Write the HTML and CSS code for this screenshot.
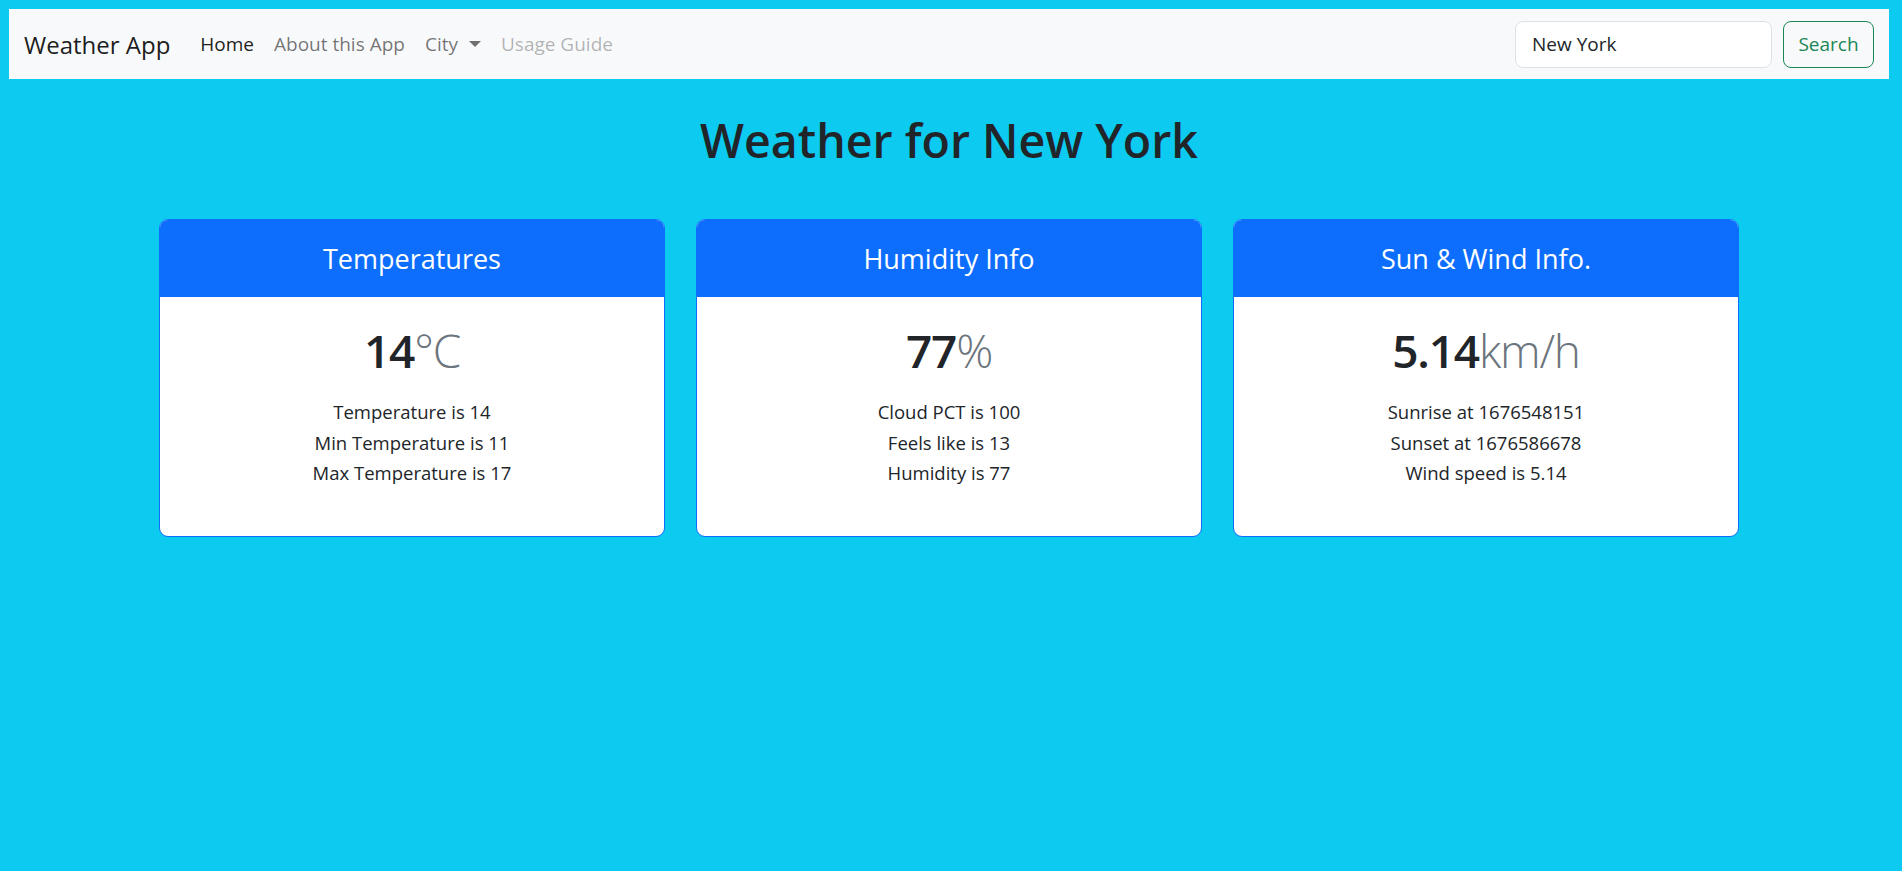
FILE: index.html
```html
<!DOCTYPE html>
<html lang="en">
<head>
<meta charset="utf-8">
<title>Weather App</title>
<link rel="stylesheet" href="styles.css">
</head>
<body>
<nav class="navbar">
  <div class="nav-left">
    <a class="brand" href="#">Weather App</a>
    <ul class="nav-links">
      <li><a class="nav-link active" href="#">Home</a></li>
      <li><a class="nav-link" href="#">About this App</a></li>
      <li><a class="nav-link dropdown" href="#">City<span class="caret"></span></a></li>
      <li><a class="nav-link disabled" href="#">Usage Guide</a></li>
    </ul>
  </div>
  <form class="search">
    <input class="search-input" type="text" value="New York">
    <button class="search-btn" type="button">Search</button>
  </form>
</nav>
<main class="main">
  <h1 class="title">Weather for New York</h1>
  <div class="cards">
    <div class="card">
      <div class="card-header">Temperatures</div>
      <div class="card-body">
        <div class="big"><span class="big-num">14</span><span class="unit">°C</span></div>
        <p class="lines">Temperature is 14<br>Min Temperature is 11<br>Max Temperature is 17</p>
      </div>
    </div>
    <div class="card">
      <div class="card-header">Humidity Info</div>
      <div class="card-body">
        <div class="big"><span class="big-num">77</span><span class="unit">%</span></div>
        <p class="lines">Cloud PCT is 100<br>Feels like is 13<br>Humidity is 77</p>
      </div>
    </div>
    <div class="card">
      <div class="card-header">Sun &amp; Wind Info.</div>
      <div class="card-body">
        <div class="big"><span class="big-num">5.14</span><span class="unit thin">km/h</span></div>
        <p class="lines">Sunrise at 1676548151<br>Sunset at 1676586678<br>Wind speed is 5.14</p>
      </div>
    </div>
  </div>
</main>
</body>
</html>
```

FILE: styles.css
```css
* { box-sizing: border-box; }

html, body { height: 100%; }

body {
  margin: 9px 13px 0 9px;
  background: #0dcaf0;
  font-family: "Open Sans", "Noto Sans", sans-serif;
  color: #212529;
  font-size: 19px;
}

.navbar {
  display: flex;
  align-items: center;
  justify-content: space-between;
  background: #f8f9fa;
  height: 70px;
  padding: 0 15px;
}

.nav-left {
  display: flex;
  align-items: center;
}

.brand {
  font-size: 24px;
  color: rgba(0, 0, 0, 0.9);
  text-decoration: none;
  margin-right: 20px;
}

.nav-links {
  display: flex;
  list-style: none;
  margin: 0;
  padding: 0;
}

.nav-link {
  display: flex;
  align-items: center;
  padding: 0 10px;
  font-size: 19px;
  color: rgba(0, 0, 0, 0.55);
  text-decoration: none;
}

.nav-link.active { color: rgba(0, 0, 0, 0.9); }
.nav-link.disabled { color: rgba(0, 0, 0, 0.3); }

.caret {
  display: inline-block;
  margin-left: 11px;
  width: 0;
  height: 0;
  border-left: 6px solid transparent;
  border-right: 6px solid transparent;
  border-top: 6px solid rgba(0, 0, 0, 0.55);
}

.search {
  display: flex;
  align-items: center;
  gap: 11px;
}

.search-input {
  width: 257px;
  height: 47px;
  border: 1px solid #dee2e6;
  border-radius: 8px;
  background: #fff;
  padding: 0 16px;
  font-family: inherit;
  font-size: 19px;
  color: #212529;
}

.search-btn {
  width: 91px;
  height: 47px;
  border: 1px solid #198754;
  border-radius: 8px;
  background: transparent;
  color: #198754;
  font-family: inherit;
  font-size: 19px;
  padding: 0;
}

.main {
  display: flex;
  flex-direction: column;
  align-items: center;
}

.title {
  margin: 31px 0 49px;
  font-size: 46.5px;
  line-height: 60px;
  font-weight: 600;
  color: #212529;
}

.cards {
  display: flex;
  gap: 31px;
}

.card {
  width: 506px;
  height: 318px;
  border: 1px solid #0d6efd;
  border-radius: 9px;
  background: #fff;
  overflow: hidden;
  display: flex;
  flex-direction: column;
}

.card-header {
  background: #0d6efd;
  color: #fff;
  text-align: center;
  font-size: 27px;
  line-height: 37px;
  padding: 20px 16px;
}

.card-body {
  text-align: center;
  padding: 21px 16px 20px;
}

.big {
  font-size: 46px;
  line-height: 64px;
  margin-bottom: 15px;
  letter-spacing: -1.2px;
}

.big-num {
  font-weight: 600;
  color: #212529;
}

.unit {
  font-weight: 300;
  color: #6c757d;
}

.lines {
  margin: 0;
  font-size: 18.5px;
  line-height: 30.5px;
  color: #212529;
}
```
